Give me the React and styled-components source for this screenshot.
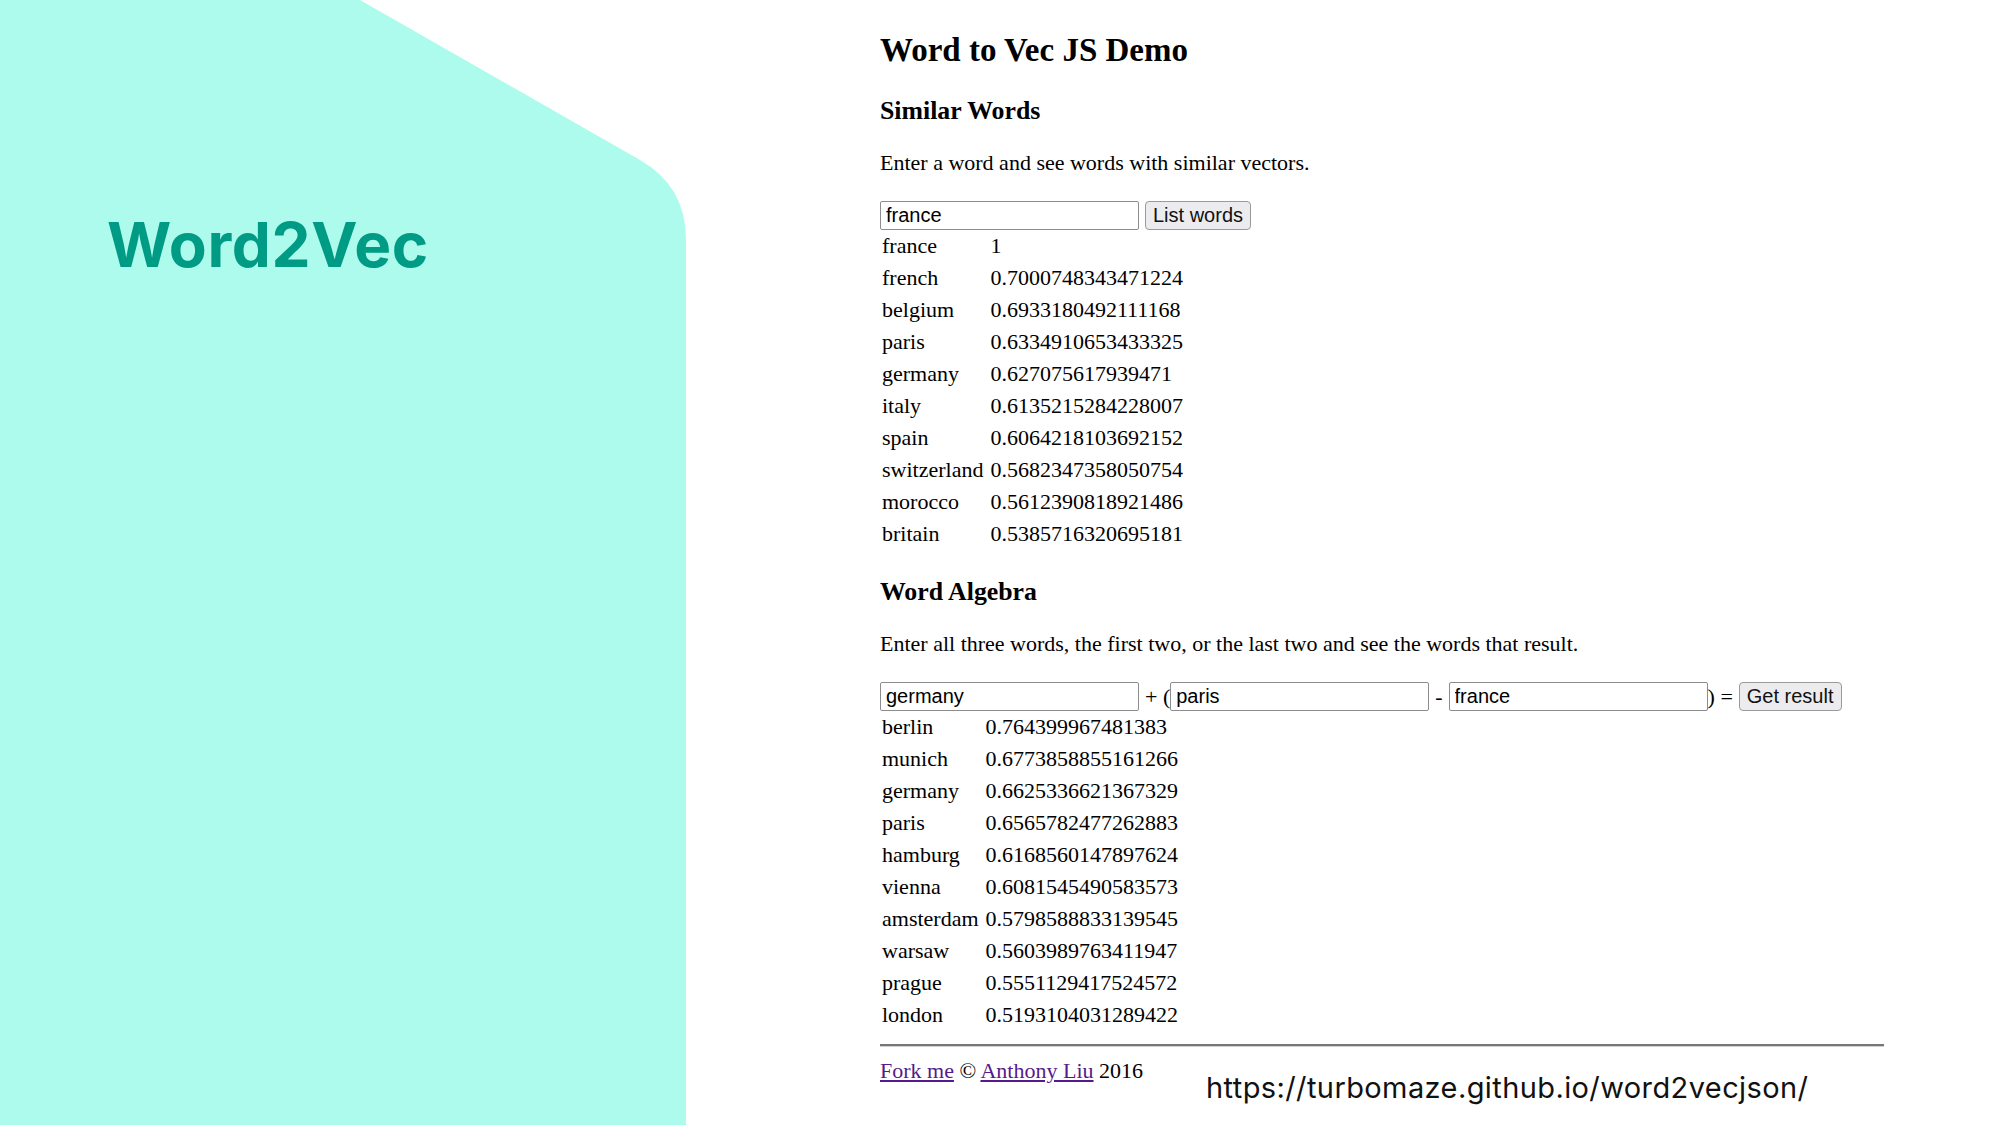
import React from 'react';
import styled, { createGlobalStyle } from 'styled-components';

const similar = [
  ['france', '1'],
  ['french', '0.7000748343471224'],
  ['belgium', '0.6933180492111168'],
  ['paris', '0.6334910653433325'],
  ['germany', '0.627075617939471'],
  ['italy', '0.6135215284228007'],
  ['spain', '0.6064218103692152'],
  ['switzerland', '0.5682347358050754'],
  ['morocco', '0.5612390818921486'],
  ['britain', '0.5385716320695181'],
];

const algebra = [
  ['berlin', '0.764399967481383'],
  ['munich', '0.6773858855161266'],
  ['germany', '0.6625336621367329'],
  ['paris', '0.6565782477262883'],
  ['hamburg', '0.6168560147897624'],
  ['vienna', '0.6081545490583573'],
  ['amsterdam', '0.5798588833139545'],
  ['warsaw', '0.5603989763411947'],
  ['prague', '0.5551129417524572'],
  ['london', '0.5193104031289422'],
];

function Results({ rows }) {
  return (
    <ResultTable>
      <tbody>
        {rows.map(([word, score]) => (
          <tr key={word}>
            <Cell>{word}</Cell>
            <Cell>{score}</Cell>
          </tr>
        ))}
      </tbody>
    </ResultTable>
  );
}

export default function App() {
  return (
    <>
      <GlobalStyle />
      <Page>
        <SidePanel>
          <Brand>Word2Vec</Brand>
        </SidePanel>

        <Main>
          <Title>Word to Vec JS Demo</Title>

          <SectionTitle $top={27}>Similar Words</SectionTitle>
          <Lead>Enter a word and see words with similar vectors.</Lead>
          <FormRow>
            <WordInput defaultValue="france" />
            <ActionButton $left={6}>List words</ActionButton>
          </FormRow>
          <Results rows={similar} />

          <SectionTitle $top={26}>Word Algebra</SectionTitle>
          <Lead>Enter all three words, the first two, or the last two and see the words that result.</Lead>
          <FormRow>
            <WordInput defaultValue="germany" />
            <Op $l={6} $r={0}>+ (</Op>
            <WordInput defaultValue="paris" />
            <Op $l={6} $r={6}>-</Op>
            <WordInput defaultValue="france" />
            <Op $l={0} $r={6}>) =</Op>
            <ActionButton $left={0}>Get result</ActionButton>
          </FormRow>
          <Results rows={algebra} />

          <Divider />
          <Footer>
            <FooterText>
              <FootLink href="#">Fork me</FootLink> © <FootLink href="#">Anthony Liu</FootLink> 2016
            </FooterText>
            <SourceUrl>https://turbomaze.github.io/word2vecjson/</SourceUrl>
          </Footer>
        </Main>
      </Page>
    </>
  );
}

const GlobalStyle = createGlobalStyle`
  html, body {
    margin: 0;
    padding: 0;
    background: #ffffff;
    overflow: hidden;
  }
  * {
    box-sizing: border-box;
  }
`;

const Page = styled.div`
  display: flex;
  width: 2000px;
  height: 1125px;
  background: #ffffff;
  font-family: 'Liberation Serif', 'Times New Roman', serif;
  color: #000;
`;

const SidePanel = styled.aside`
  flex: 0 0 686px;
  height: 100%;
  background: #adfbec;
  clip-path: path('M0 0 H360 L640 160 Q686 186 686 240 V1125 H0 Z');
  padding: 214px 0 0 107px;
`;

const Brand = styled.div`
  font-family: Inter, 'Open Sans', sans-serif;
  font-weight: 700;
  font-size: 62px;
  line-height: 62px;
  color: #009b84;
  letter-spacing: 0.6px;
`;

const Main = styled.main`
  width: 1198px;
  padding: 31px 0 0 194px;
  display: flex;
  flex-direction: column;
  align-items: flex-start;
`;

const Title = styled.h1`
  margin: 0;
  font-size: 33px;
  line-height: 38px;
  font-weight: 700;
`;

const SectionTitle = styled.h2`
  margin: ${p => p.$top}px 0 0;
  font-size: 25.8px;
  line-height: 29px;
  font-weight: 700;
`;

const Lead = styled.p`
  margin: 25px 0 0;
  font-size: 22px;
  line-height: 26px;
`;

const FormRow = styled.div`
  margin-top: 25px;
  display: flex;
  align-items: center;
  height: 29px;
  font-size: 22px;
`;

const WordInput = styled.input`
  width: 259px;
  height: 29px;
  margin: 0;
  padding: 0 5px;
  border: 1px solid #8d8d8d;
  border-radius: 2px;
  font-family: 'Liberation Sans', Arial, sans-serif;
  font-size: 20px;
  color: #000;
  background: #fff;
  outline: none;
`;

const Op = styled.span`
  margin: 0 ${p => p.$r}px 0 ${p => p.$l}px;
  white-space: pre;
  line-height: 29px;
`;

const ActionButton = styled.button`
  margin-left: ${p => p.$left}px;
  height: 29px;
  padding: 0 7px;
  border: 1px solid #9a9a9a;
  border-radius: 4px;
  background: #ececee;
  font-family: 'Liberation Sans', Arial, sans-serif;
  font-size: 20px;
  color: #111;
`;

const ResultTable = styled.table`
  border-collapse: separate;
  border-spacing: 2px;
  margin-left: -2px;
  margin-top: -1px;
  font-size: 22px;
`;

const Cell = styled.td`
  height: 30px;
  padding: 0 2px;
  line-height: 30px;
  vertical-align: middle;
  white-space: nowrap;

  & + & {
    padding-left: 3px;
  }
`;

const Divider = styled.hr`
  width: 1004px;
  margin: 12px 0 0;
  border: none;
  border-top: 2px solid #777;
  border-bottom: 1px solid #d0d0d0;
`;

const Footer = styled.footer`
  display: flex;
  align-items: flex-start;
  margin-top: 11px;
`;

const FooterText = styled.div`
  font-size: 22px;
  line-height: 26px;
`;

const FootLink = styled.a`
  color: #551a8b;
  text-decoration: underline;
`;

const SourceUrl = styled.div`
  margin: 13px 0 0 63px;
  font-family: Inter, 'Open Sans', sans-serif;
  font-size: 29px;
  line-height: 34px;
  letter-spacing: 0.4px;
  color: #111;
`;
